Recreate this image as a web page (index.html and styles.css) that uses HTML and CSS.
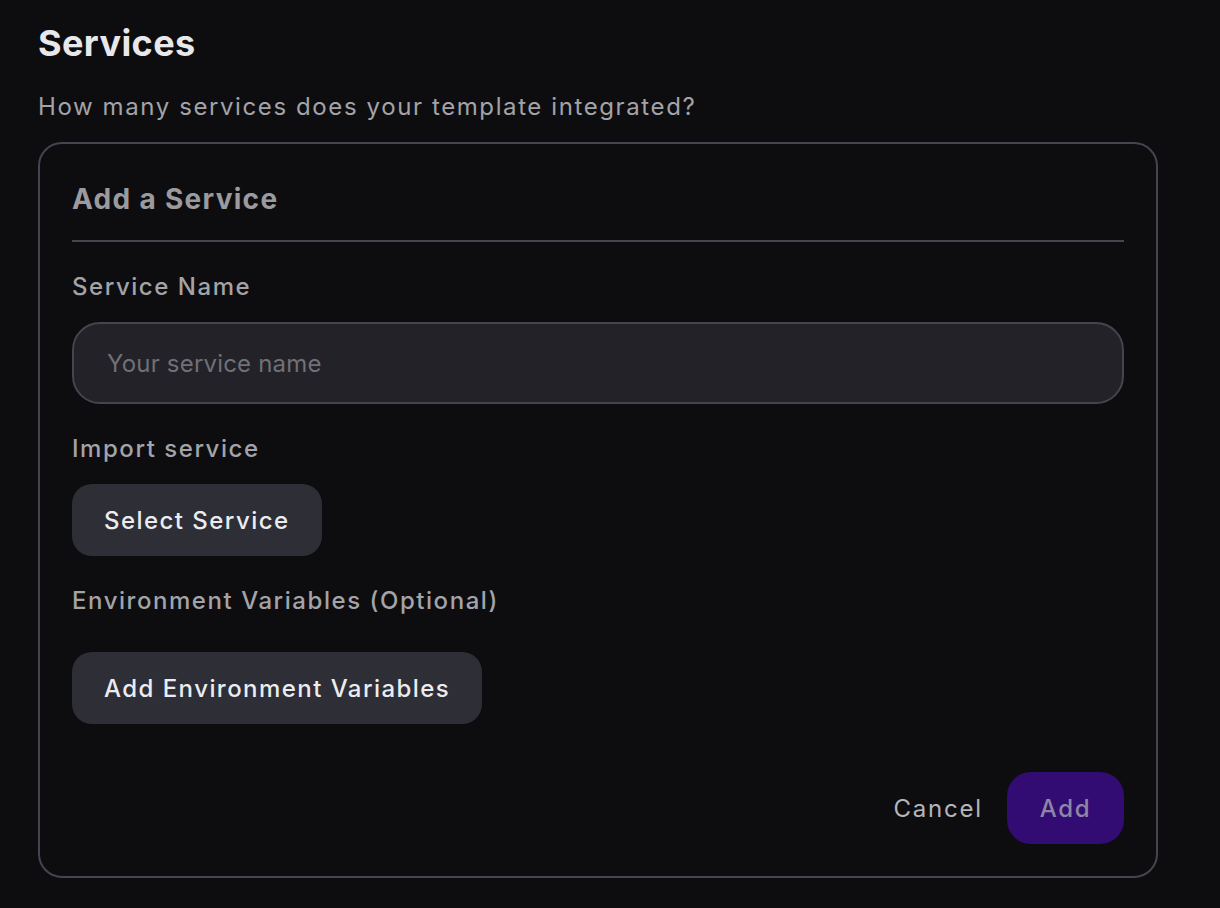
FILE: index.html
```html
<!DOCTYPE html>
<html lang="en">
<head>
<meta charset="utf-8">
<title>Services</title>
<link rel="stylesheet" href="styles.css">
</head>
<body>
<main class="page">
  <h1 class="title">Services</h1>
  <p class="subtitle">How many services does your template integrated?</p>
  <section class="card">
    <h2 class="card-title">Add a Service</h2>
    <div class="field">
      <label class="label" for="svc">Service Name</label>
      <input id="svc" class="input" type="text" placeholder="Your service name">
    </div>
    <div class="field">
      <span class="label">Import service</span>
      <button class="btn">Select Service</button>
    </div>
    <div class="field field-env">
      <span class="label">Environment Variables (Optional)</span>
      <button class="btn">Add Environment Variables</button>
    </div>
    <div class="actions">
      <button class="btn-text">Cancel</button>
      <button class="btn-primary">Add</button>
    </div>
  </section>
</main>
</body>
</html>
```
FILE: styles.css
```css
* { box-sizing: border-box; }
html, body { margin: 0; padding: 0; background: #0d0d10; }
body {
  font-family: Inter, "Noto Sans", "Liberation Sans", sans-serif;
  color: #e6e6e8;
  letter-spacing: 1.5px;
}
.page {
  padding: 22px 62px 0 38px;
  width: 1220px;
}
.title {
  margin: 0;
  font-size: 36px;
  font-weight: 700;
  line-height: 42px;
  color: #e8e8ea;
  letter-spacing: 0.4px;
}
.subtitle {
  margin: 28px 0 0;
  font-size: 24px;
  line-height: 30px;
  color: #a3a3a8;
  letter-spacing: 1.6px;
}
.card {
  margin-top: 20px;
  width: 1120px;
  border: 2px solid #45444f;
  border-radius: 24px;
  padding: 35px 32px 32px;
}
.card-title {
  margin: 0;
  font-size: 28px;
  font-weight: 700;
  line-height: 40px;
  color: #9b9b9f;
  padding-bottom: 21px;
  border-bottom: 2px solid #45444f;
  letter-spacing: 1.3px;
}
.field {
  display: flex;
  flex-direction: column;
  align-items: flex-start;
  margin-top: 30px;
}
.label {
  font-size: 24px;
  font-weight: 500;
  line-height: 30px;
  color: #a3a3a8;
  margin-bottom: 20px;
  letter-spacing: 1.55px;
}
.field-env .label { margin-bottom: 36px; }
.input {
  width: 100%;
  height: 82px;
  border-radius: 28px;
  border: 2px solid #45444f;
  background: #222228;
  padding: 0 33px;
  font: inherit;
  font-size: 24px;
  color: #e6e6e8;
  outline: none;
  letter-spacing: 0.2px;
}
.input::placeholder { color: #707076; }
.btn {
  height: 72px;
  border: none;
  border-radius: 20px;
  background: #2e2e37;
  color: #ececee;
  font: inherit;
  font-size: 24px;
  font-weight: 500;
  padding: 0 32px;
  cursor: pointer;
  letter-spacing: 1.45px;
}
.actions {
  display: flex;
  justify-content: flex-end;
  align-items: center;
  gap: 24px;
  margin-top: 48px;
}
.btn-text {
  background: none;
  border: none;
  color: #b5b5b9;
  font: inherit;
  font-size: 24px;
  padding: 0;
  letter-spacing: 1.8px;
}
.btn-primary {
  height: 72px;
  width: 117px;
  border: none;
  border-radius: 24px;
  background: #330c73;
  color: #8d86a6;
  font: inherit;
  font-size: 24px;
  font-weight: 500;
  letter-spacing: 1.7px;
}
```
